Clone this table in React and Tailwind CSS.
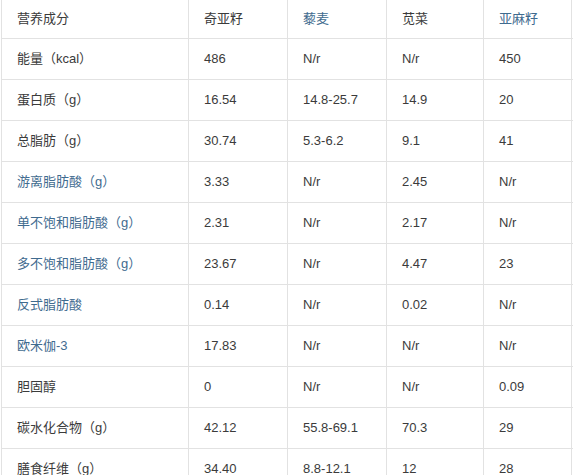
import React from "react";

const BLUE = "text-[#3f6b8f]";
const GRAY = "text-[#3b3b3b]";

const header = [
  { t: "营养成分", blue: false },
  { t: "奇亚籽", blue: false },
  { t: "藜麦", blue: true },
  { t: "苋菜", blue: false },
  { t: "亚麻籽", blue: true },
];

const rows = [
  ["能量（kcal）", false, "486", "N/r", "N/r", "450"],
  ["蛋白质（g）", false, "16.54", "14.8-25.7", "14.9", "20"],
  ["总脂肪（g）", false, "30.74", "5.3-6.2", "9.1", "41"],
  ["游离脂肪酸（g）", true, "3.33", "N/r", "2.45", "N/r"],
  ["单不饱和脂肪酸（g）", true, "2.31", "N/r", "2.17", "N/r"],
  ["多不饱和脂肪酸（g）", true, "23.67", "N/r", "4.47", "23"],
  ["反式脂肪酸", true, "0.14", "N/r", "0.02", "N/r"],
  ["欧米伽-3", true, "17.83", "N/r", "N/r", "N/r"],
  ["胆固醇", false, "0", "N/r", "N/r", "0.09"],
  ["碳水化合物（g）", false, "42.12", "55.8-69.1", "70.3", "29"],
  ["膳食纤维（g）", false, "34.40", "8.8-12.1", "12", "28"],
];

const widths = ["w-[187px]", "w-[99px]", "w-[99px]", "w-[97px]", "w-[89px] border-r"];

const Cell = ({ i, blue, children }) => (
  <div className={`${widths[i]} shrink-0 border-l border-[#e2e2e2] pl-[15px] flex items-center ${blue ? BLUE : GRAY}`}>
    {children}
  </div>
);

const App = () => {
  return (
    <div className="w-[574px] h-[475px] overflow-hidden bg-white text-[13px] font-['Liberation_Sans','Noto_Sans_CJK_SC',sans-serif]">
      <div className="ml-px w-[572px]">
        <div className="flex h-[39px] border-b border-[#e2e2e2]">
          {header.map((h, i) => (
            <Cell key={i} i={i} blue={h.blue}>
              {h.t}
            </Cell>
          ))}
        </div>
        {rows.map((r, k) => (
          <div key={k} className="flex h-[41px] border-b border-[#e2e2e2]">
            <Cell i={0} blue={r[1]}>
              {r[0]}
            </Cell>
            {r.slice(2).map((v, j) => (
              <Cell key={j} i={j + 1} blue={false}>
                {v}
              </Cell>
            ))}
          </div>
        ))}
      </div>
    </div>
  );
};

export default App;
